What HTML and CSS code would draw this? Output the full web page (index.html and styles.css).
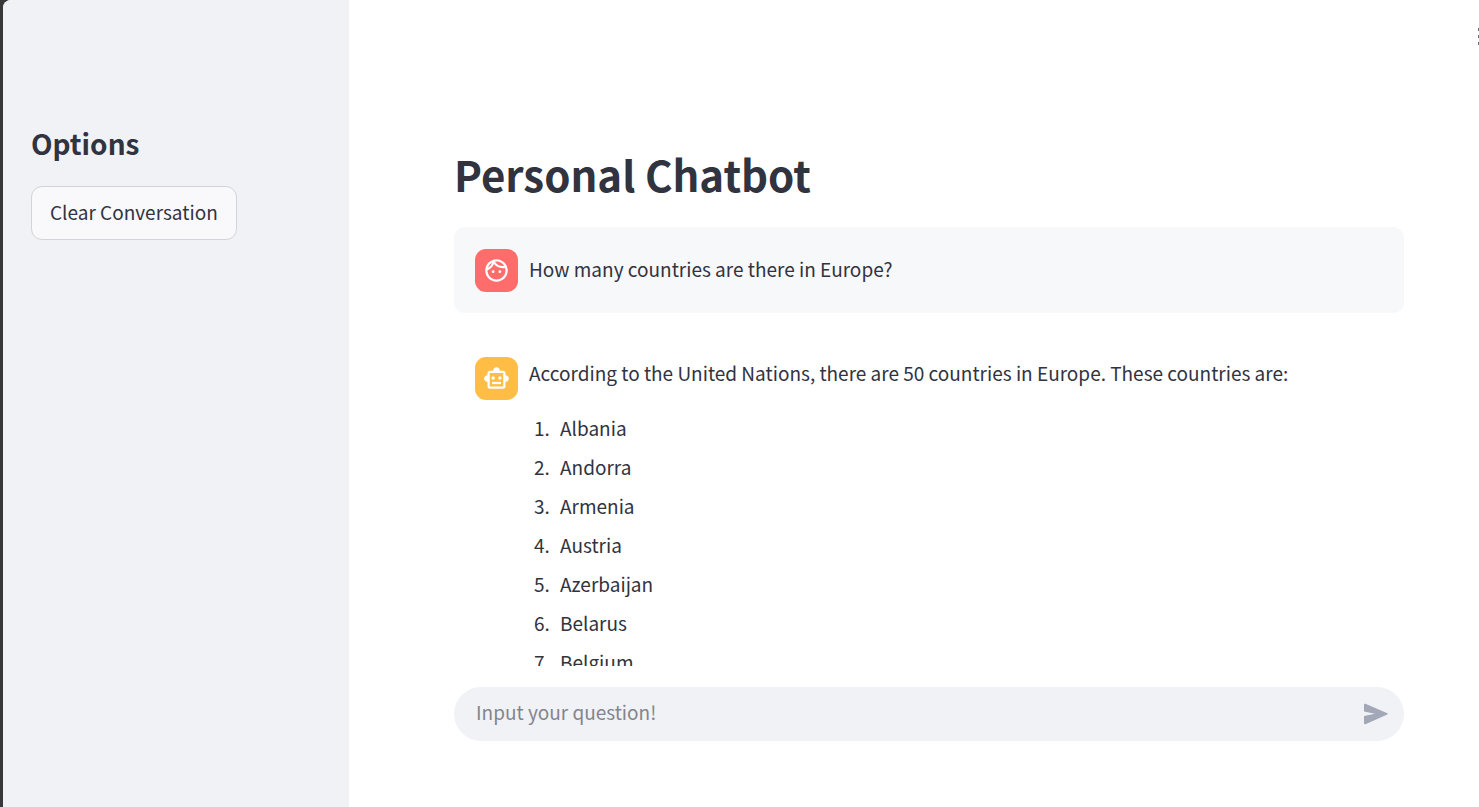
FILE: index.html
```html
<!DOCTYPE html>
<html lang="en">
<head>
<meta charset="utf-8">
<title>Personal Chatbot</title>
<link rel="stylesheet" href="styles.css">
</head>
<body>
<div class="app">
  <aside class="sidebar">
    <h2 class="sidebar-title">Options</h2>
    <button class="clear-button" type="button">Clear Conversation</button>
  </aside>
  <main class="main">
    <button class="menu-button" type="button" aria-label="Main menu">
      <svg viewBox="0 0 4 18" aria-hidden="true"><rect y="1" width="3" height="3"/><rect y="8" width="3" height="3"/><rect y="15" width="3" height="3"/></svg>
    </button>
    <div class="conversation">
      <h1 class="title">Personal Chatbot</h1>
      <section class="message message-user">
        <div class="avatar avatar-user">
          <svg viewBox="0 0 24 24" aria-hidden="true"><path d="M10.25 13a1.25 1.25 0 1 1-2.5 0 1.25 1.25 0 0 1 2.5 0zM15 11.75a1.25 1.25 0 1 0 0 2.5 1.25 1.25 0 0 0 0-2.5zM22 12c0 5.52-4.48 10-10 10S2 17.52 2 12 6.48 2 12 2s10 4.48 10 10zM10.66 4.12C12.06 6.44 14.6 8 17.5 8c.46 0 .91-.05 1.34-.12C17.44 5.56 14.9 4 12 4c-.46 0-.91.05-1.34.12zM4.42 9.47c1.71-.97 3.03-2.55 3.66-4.44C6.37 6 5.05 7.58 4.42 9.47zM20 12c0-.78-.12-1.53-.33-2.24-.7.15-1.42.24-2.17.24-3.13 0-5.92-1.44-7.76-3.69C8.69 8.87 6.6 10.88 4 11.86V12c0 4.41 3.59 8 8 8s8-3.59 8-8z"/></svg>
        </div>
        <p class="message-text message-text-single">How many countries are there in Europe?</p>
      </section>
      <section class="message">
        <div class="avatar avatar-bot">
          <svg viewBox="0 0 24 24" aria-hidden="true"><path d="M20 9V7c0-1.1-.9-2-2-2h-3c0-1.66-1.34-3-3-3S9 3.34 9 5H6c-1.1 0-2 .9-2 2v2c-1.66 0-3 1.34-3 3s1.34 3 3 3v4c0 1.1.9 2 2 2h12c1.1 0 2-.9 2-2v-4c1.66 0 3-1.34 3-3s-1.34-3-3-3zM18 19H6V7h12v12z" fill-rule="evenodd"/><circle cx="9" cy="11.5" r="1.5"/><circle cx="15" cy="11.5" r="1.5"/><path d="M8 15h8v2H8z"/></svg>
        </div>
        <div class="message-body">
          <p class="message-text">According to the United Nations, there are 50 countries in Europe. These countries are:</p>
          <ol class="country-list">
            <li>Albania</li>
            <li>Andorra</li>
            <li>Armenia</li>
            <li>Austria</li>
            <li>Azerbaijan</li>
            <li>Belarus</li>
            <li>Belgium</li>
          </ol>
        </div>
      </section>
    </div>
    <form class="chat-form">
      <input class="chat-input" type="text" placeholder="Input your question!" aria-label="Input your question!">
      <button class="send-button" type="button" aria-label="Send">
        <svg viewBox="0 0 24 22" aria-hidden="true"><path d="M1.5.8 23.3 10.3q1 .6 0 1.200L1.500 21.200Q0 21.600 0 20.300V13l11-2.200L0 8.600V1.700Q0 .4 1.500.8z"/></svg>
      </button>
    </form>
  </main>
</div>
</body>
</html>
```
FILE: styles.css
```css
* {
  box-sizing: border-box;
}

body {
  margin: 0;
  background: #38383a;
  color: #31333f;
  font-family: "Noto Sans CJK SC", "Noto Sans", sans-serif;
  font-size: 19px;
  line-height: 32px;
}

h1, h2, p, ol {
  margin: 0;
}

button, input {
  font: inherit;
  color: inherit;
}

svg {
  display: block;
  fill: currentColor;
}

.app {
  display: flex;
  height: 100vh;
  margin-left: 3px;
  overflow: hidden;
  border-top-left-radius: 8px;
  background: #fff;
}

.sidebar {
  flex: 0 0 346px;
  padding: 119px 28px 0;
  background: #f0f2f6;
}

.sidebar-title {
  margin-bottom: 19px;
  font-size: 28px;
  line-height: 48px;
  font-weight: 700;
}

.clear-button {
  height: 54px;
  padding: 0 18px 2px;
  border: 1px solid #d3d4d9;
  border-radius: 11px;
  background: #f9f9fb;
}

.main {
  position: relative;
  display: flex;
  flex: 1;
  flex-direction: column;
  min-width: 0;
  padding: 0 75px 66px 105px;
}

.menu-button {
  position: absolute;
  top: 27px;
  right: 0;
  width: 1px;
  height: 18px;
  padding: 0;
  overflow: hidden;
  border: 0;
  background: none;
  color: #6b6c75;
}

.menu-button svg {
  width: 4px;
  height: 18px;
}

.conversation {
  flex: 1;
  min-height: 0;
  padding-top: 139px;
  overflow: hidden;
}

.title {
  margin-bottom: 18px;
  font-size: 42px;
  line-height: 70px;
  font-weight: 700;
}

.message {
  display: flex;
  gap: 11px;
  padding: 22px 21px 21px;
  border-radius: 11px;
}

.message-user {
  margin-bottom: 22px;
  background: #f7f8fa;
}

.avatar {
  display: grid;
  flex: none;
  place-items: center;
  width: 43px;
  height: 43px;
  border-radius: 11px;
  color: #fff;
}

.avatar svg {
  width: 27px;
  height: 27px;
}

.avatar-user {
  background: #ff6c6c;
}

.avatar-bot {
  background: #ffbd45;
}

.message-text-single {
  align-self: center;
  padding-bottom: 3px;
}

.country-list {
  margin-top: 23px;
  padding: 0 0 0 25px;
}

.country-list li {
  margin-bottom: 7px;
  padding-left: 6px;
}

.chat-form {
  display: flex;
  align-items: center;
  height: 54px;
  margin-top: 21px;
  padding: 0 16px 0 22px;
  border-radius: 27px;
  background: #f0f2f6;
}

.chat-input {
  flex: 1;
  min-width: 0;
  padding: 0 0 4px;
  border: 0;
  outline: 0;
  background: none;
}

.chat-input::placeholder {
  color: #83858d;
  opacity: 1;
}

.send-button {
  padding: 0;
  border: 0;
  background: none;
  color: #a3a8b8;
}

.send-button svg {
  width: 24px;
  height: 22px;
}
```
